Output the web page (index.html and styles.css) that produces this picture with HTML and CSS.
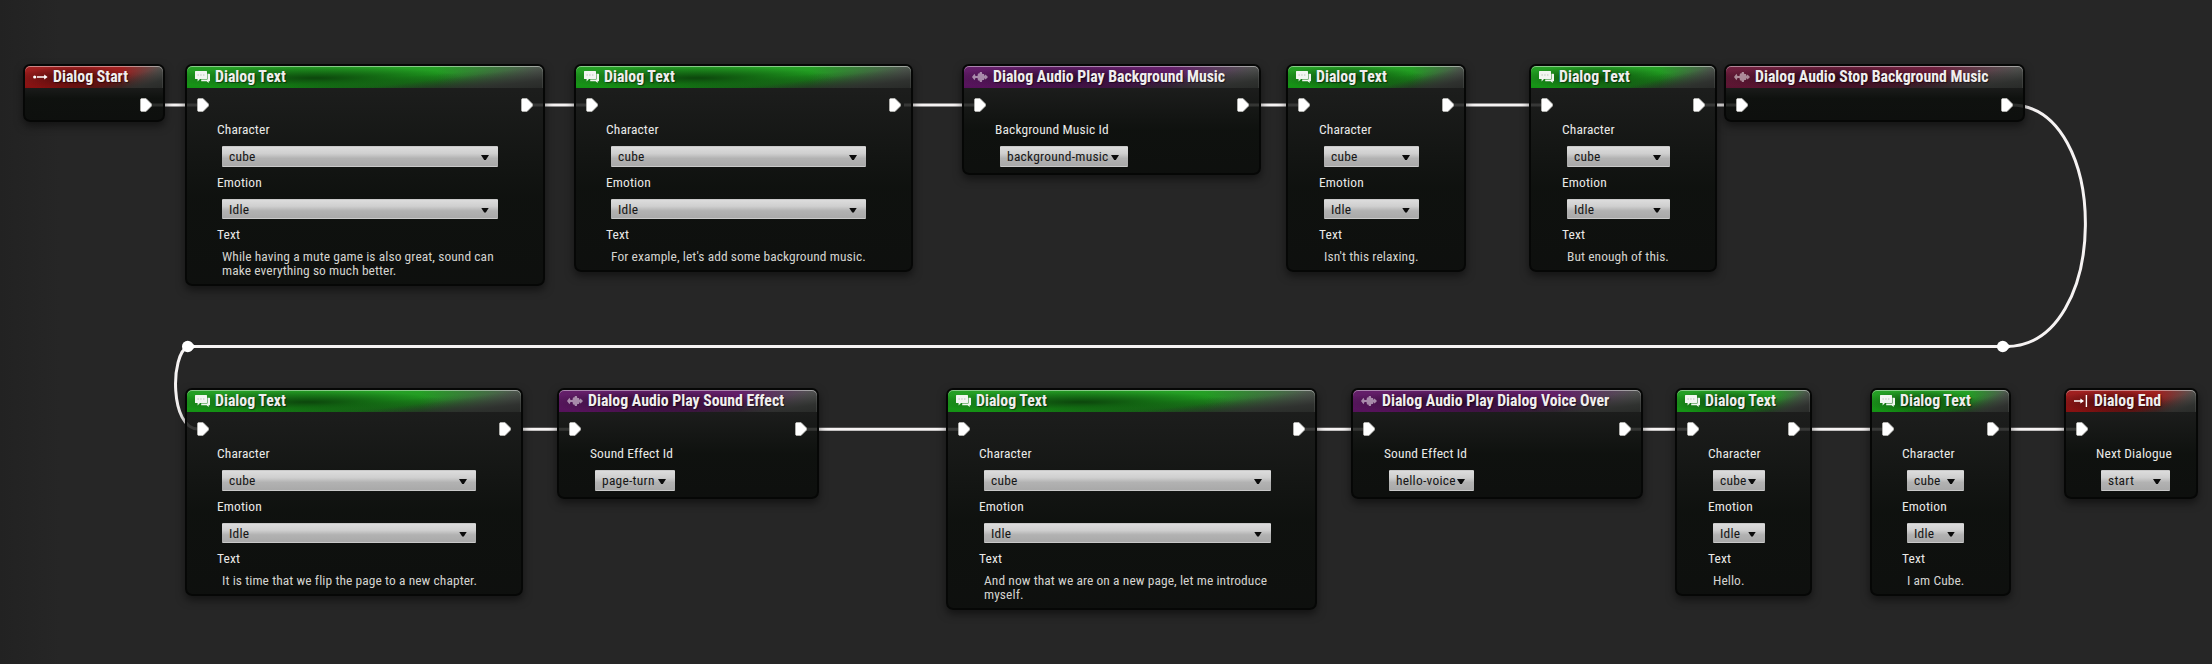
FILE: index.html
```
<!DOCTYPE html>
<html lang="en">
<head>
<meta charset="utf-8">
<title>Dialog Graph</title>
<link rel="stylesheet" href="styles.css">
</head>
<body>
<svg class="defs" aria-hidden="true">
  <symbol id="pin" viewBox="0 0 12 14"><path d="M1.3.5H6L11.5 6v2L6 13.5H1.3L.5 12.7V1.3Z" fill="#fff" stroke="#b9b9b5" stroke-width=".8"/></symbol>
  <symbol id="talk" viewBox="0 0 16 12"><path d="M.6 0H11.4Q12 0 12 .6V7.4Q12 8 11.4 8H5L2.6 10.4V8H.6Q0 8 0 7.4V.6Q0 0 .6 0Z" fill="#f2f5f1"/><path d="M12.5 2.7H14.4Q15 2.7 15 3.3V9.7Q15 10.3 14.4 10.3H13.7V12L11.6 10.3H6.2V8.5H12.5Z" fill="#f2f5f1"/><path d="M2.5 4h1.3M5.3 4h1.3M8.1 4h1.3" stroke="#b4beb4" stroke-width="1"/></symbol>
  <symbol id="wave" viewBox="0 0 16 10"><path d="M0 5 2.5 1.8 3.5 4 5.5 4 6 1.5 7.3 1.5 8 0 9.8 0 10.3 2 12 2 12.5 4 13.5 2.6 16 5 13.5 7.4 12.5 6 12 8 10.3 8 9.8 10 8 10 7.3 8.5 6 8.5 5.5 6 3.5 6 2.5 8.2Z" fill="#fff" fill-opacity=".5"/></symbol>
  <symbol id="start" viewBox="0 0 15 8"><circle cx="1.7" cy="4" r="1.6" fill="#fff"/><path d="M4 4H12" stroke="#fff" stroke-width="1.5"/><path d="M11.2 1.6 14.6 4 11.2 6.4Z" fill="#fff"/></symbol>
  <symbol id="end" viewBox="0 0 14 12"><path d="M0 6H8M12.4 0V12" stroke="#fff" stroke-width="1.4"/><path d="M6.4 3.4 10 6 6.4 8.6Z" fill="#fff"/></symbol>
</svg>
<main class="graph">
  <svg class="wires" viewBox="0 0 2212 664">
    <path d="M149 105H198M530 105H587M904 105H976M1247 105H1300M1451 105H1543M1702 105H1737M521 429.2H570M805 429.2H960M1303 429.2H1365M1629 429.2H1688M1798 429.2H1883M1997 429.2H2077"/>
    <path d="M2011 105C2111 105 2111 346.5 2006 346.5H188C170 354 170 429 198 429"/>
    <g class="knots"><circle cx="187.7" cy="346.5" r="5.7"/><path d="M190 341.5 196 346.5 190 351.5Z"/><circle cx="2002.7" cy="346.5" r="5.7"/><path d="M2005 341.5 2011 346.5 2005 351.5Z"/></g>
  </svg>

  <section class="node red" style="left:23px;top:64px;width:142px">
    <header><svg class="ic-start"><use href="#start"/></svg><h2>Dialog Start</h2></header>
    <div class="pins out-only"><svg><use href="#pin"/></svg></div>
  </section>

  <section class="node green" style="left:185px;top:64px;width:360px">
    <header><svg class="ic-talk"><use href="#talk"/></svg><h2>Dialog Text</h2></header>
    <div class="pins"><svg><use href="#pin"/></svg><svg><use href="#pin"/></svg></div>
    <div class="fields"><label>Character</label><div class="select" style="width:276px">cube</div><label>Emotion</label><div class="select short" style="width:276px">Idle</div><label>Text</label><p>While having a mute game is also great, sound can<br>make everything so much better.</p></div>
  </section>

  <section class="node green" style="left:574px;top:64px;width:339px">
    <header><svg class="ic-talk"><use href="#talk"/></svg><h2>Dialog Text</h2></header>
    <div class="pins"><svg><use href="#pin"/></svg><svg><use href="#pin"/></svg></div>
    <div class="fields"><label>Character</label><div class="select" style="width:255px">cube</div><label>Emotion</label><div class="select short" style="width:255px">Idle</div><label>Text</label><p>For example, let's add some background music.</p></div>
  </section>

  <section class="node purple" style="left:962px;top:64px;width:299px">
    <header><svg class="ic-wave"><use href="#wave"/></svg><h2>Dialog Audio Play Background Music</h2></header>
    <div class="pins"><svg><use href="#pin"/></svg><svg><use href="#pin"/></svg></div>
    <div class="fields audio"><label>Background Music Id</label><div class="select" style="width:128px">background-music</div></div>
  </section>

  <section class="node green" style="left:1286px;top:64px;width:180px">
    <header><svg class="ic-talk"><use href="#talk"/></svg><h2>Dialog Text</h2></header>
    <div class="pins"><svg><use href="#pin"/></svg><svg><use href="#pin"/></svg></div>
    <div class="fields inset"><label>Character</label><div class="select" style="width:95px">cube</div><label>Emotion</label><div class="select short" style="width:95px">Idle</div><label>Text</label><p>Isn't this relaxing.</p></div>
  </section>

  <section class="node green" style="left:1529px;top:64px;width:188px">
    <header><svg class="ic-talk"><use href="#talk"/></svg><h2>Dialog Text</h2></header>
    <div class="pins"><svg><use href="#pin"/></svg><svg><use href="#pin"/></svg></div>
    <div class="fields inset"><label>Character</label><div class="select" style="width:103px">cube</div><label>Emotion</label><div class="select short" style="width:103px">Idle</div><label>Text</label><p>But enough of this.</p></div>
  </section>

  <section class="node maroon" style="left:1724px;top:64px;width:301px">
    <header><svg class="ic-wave"><use href="#wave"/></svg><h2>Dialog Audio Stop Background Music</h2></header>
    <div class="pins"><svg><use href="#pin"/></svg><svg><use href="#pin"/></svg></div>
  </section>

  <section class="node green" style="left:185px;top:388px;width:338px">
    <header><svg class="ic-talk"><use href="#talk"/></svg><h2>Dialog Text</h2></header>
    <div class="pins"><svg><use href="#pin"/></svg><svg><use href="#pin"/></svg></div>
    <div class="fields"><label>Character</label><div class="select" style="width:254px">cube</div><label>Emotion</label><div class="select short" style="width:254px">Idle</div><label>Text</label><p>It is time that we flip the page to a new chapter.</p></div>
  </section>

  <section class="node purple" style="left:557px;top:388px;width:262px">
    <header><svg class="ic-wave"><use href="#wave"/></svg><h2>Dialog Audio Play Sound Effect</h2></header>
    <div class="pins"><svg><use href="#pin"/></svg><svg><use href="#pin"/></svg></div>
    <div class="fields audio"><label>Sound Effect Id</label><div class="select" style="width:80px">page-turn</div></div>
  </section>

  <section class="node green" style="left:946px;top:388px;width:371px">
    <header><svg class="ic-talk"><use href="#talk"/></svg><h2>Dialog Text</h2></header>
    <div class="pins"><svg><use href="#pin"/></svg><svg><use href="#pin"/></svg></div>
    <div class="fields inset"><label>Character</label><div class="select" style="width:287px">cube</div><label>Emotion</label><div class="select short" style="width:287px">Idle</div><label>Text</label><p>And now that we are on a new page, let me introduce<br>myself.</p></div>
  </section>

  <section class="node purple" style="left:1351px;top:388px;width:292px">
    <header><svg class="ic-wave"><use href="#wave"/></svg><h2>Dialog Audio Play Dialog Voice Over</h2></header>
    <div class="pins"><svg><use href="#pin"/></svg><svg><use href="#pin"/></svg></div>
    <div class="fields audio"><label>Sound Effect Id</label><div class="select" style="width:85px">hello-voice</div></div>
  </section>

  <section class="node green" style="left:1675px;top:388px;width:137px">
    <header><svg class="ic-talk"><use href="#talk"/></svg><h2>Dialog Text</h2></header>
    <div class="pins"><svg><use href="#pin"/></svg><svg><use href="#pin"/></svg></div>
    <div class="fields inset"><label>Character</label><div class="select" style="width:52px">cube</div><label>Emotion</label><div class="select short" style="width:52px">Idle</div><label>Text</label><p>Hello.</p></div>
  </section>

  <section class="node green" style="left:1870px;top:388px;width:141px">
    <header><svg class="ic-talk"><use href="#talk"/></svg><h2>Dialog Text</h2></header>
    <div class="pins"><svg><use href="#pin"/></svg><svg><use href="#pin"/></svg></div>
    <div class="fields"><label>Character</label><div class="select" style="width:57px">cube</div><label>Emotion</label><div class="select short" style="width:57px">Idle</div><label>Text</label><p>I am Cube.</p></div>
  </section>

  <section class="node red" style="left:2064px;top:388px;width:134px">
    <header><svg class="ic-end"><use href="#end"/></svg><h2>Dialog End</h2></header>
    <div class="pins"><svg><use href="#pin"/></svg></div>
    <div class="fields exit"><label>Next Dialogue</label><div class="select" style="width:69px">start</div></div>
  </section>
</main>
</body>
</html>
```
FILE: styles.css
```
* { box-sizing: border-box; }
body { margin: 0; background: #262626; font-family: "Roboto Condensed", Roboto, sans-serif; }
.defs { display: block; width: 0; height: 0; }
.graph {
  position: relative;
  width: 2212px;
  height: 664px;
  overflow: hidden;
  background: linear-gradient(90deg, #222 0, #262626 60px);
}
.wires { position: absolute; left: 0; top: 0; width: 2212px; height: 664px; }
.wires > path { fill: none; stroke: #f6f3f3; stroke-width: 3; }
.knots { fill: #fff; }

.node {
  position: absolute;
  display: flex;
  flex-direction: column;
  padding-bottom: 8px;
  border: 2px solid #060706;
  border-radius: 7px;
  background: linear-gradient(rgba(27, 28, 27, .86) 20px, rgba(11, 14, 11, .86) 60%, rgba(10, 12, 10, .86));
  box-shadow: 0 4px 8px rgba(0, 0, 0, .5);
}
.node:has(.fields) { padding-bottom: 6px; }
.node:has(p) { padding-bottom: 5px; }
.red { --top: #a32222; --main: #861111; --deep: #4a0a0a; }
.green { --top: #27a127; --main: #149214; --deep: #0d4a0d; }
.purple { --top: #65206b; --main: #55125a; --deep: #2e0c32; }
.maroon { --top: #70213f; --main: #5a1431; --deep: #300b1b; }

header {
  display: flex;
  align-items: center;
  height: 22px;
  padding-left: 8px;
  border-radius: 5px 5px 0 0;
  box-shadow: inset 0 1px 0 rgba(255, 255, 255, .45), inset -1px 0 0 rgba(255, 255, 255, .08);
  background:
    linear-gradient(to bottom right, transparent 50%, rgba(44, 46, 44, .9) 82%, #282a28) 100% 0 / 50% 100% no-repeat,
    linear-gradient(90deg, transparent 70%, rgba(82, 86, 82, .95) 98%),
    radial-gradient(ellipse 42% 55% at 36% 55%, var(--deep) 5%, transparent 100%),
    linear-gradient(to bottom right, transparent 50%, rgba(28, 30, 28, .7) 85%) 100% 0 / 85% 100% no-repeat,
    linear-gradient(var(--top), var(--main));
}
h2 {
  margin: 0;
  font-size: 15.8px;
  font-weight: 700;
  line-height: 20px;
  color: #f0eeee;
  white-space: nowrap;
  text-shadow: 1px 1px 1px rgba(0, 0, 0, .5);
}
.ic-talk { width: 16px; height: 12px; margin-right: 4px; }
.ic-wave { width: 16px; height: 10px; margin-right: 5px; }
.ic-start { width: 15px; height: 8px; margin-right: 5px; }
.ic-end { width: 14px; height: 12px; margin-right: 6px; }

.pins { display: flex; justify-content: space-between; padding: 10px 10px 0 10px; }
.pins svg { width: 12px; height: 14px; }
.out-only { justify-content: flex-end; padding-right: 11px; }

.fields {
  display: flex;
  flex-direction: column;
  align-items: flex-start;
  padding: 10px 0 0 30px;
  font-size: 13.45px;
  color: #e9e9e7;
  white-space: nowrap;
}
.audio, .inset { padding-left: 31px; }
label { line-height: 16px; letter-spacing: .14px; }
.select {
  display: flex;
  align-items: center;
  justify-content: space-between;
  height: 21px;
  margin: 8px 0 8px 5px;
  padding: 0 9px 0 7px;
  border: 1px solid #c9c9c9;
  border-width: 1px 0;
  border-radius: 1px;
  background: linear-gradient(#dcdcdc, #cfcfcf 35%, #b2b2b2 60%, #a9a9a9);
  letter-spacing: .25px;
  color: #161616;
}
.select::after {
  content: "";
  flex: none;
  width: 8px;
  height: 5px;
  margin-top: 2px;
  background: #0b0b0b;
  clip-path: polygon(0 0, 100% 0, 60% 100%, 40% 100%);
}
.short { height: 20px; }
.audio .select, .exit .select { margin-bottom: 0; }
p { margin: 7px 0 0 5px; line-height: 14px; letter-spacing: .08px; color: #d3d3cf; }
```
